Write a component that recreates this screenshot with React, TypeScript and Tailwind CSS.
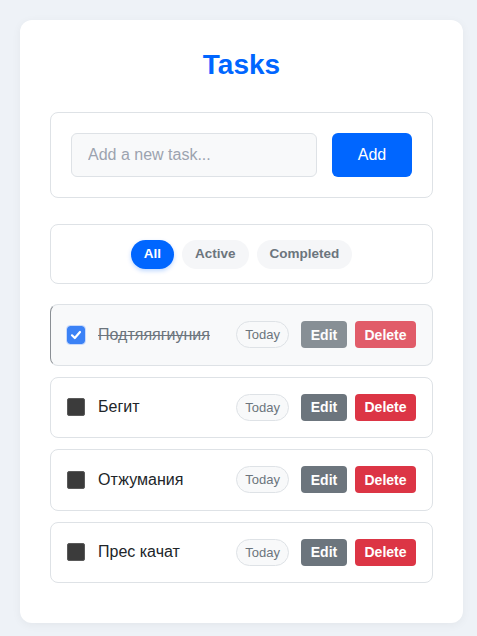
import { useState } from "react";

type Task = { id: number; text: string; done: boolean };

const initialTasks: Task[] = [
  { id: 1, text: "Подтяяягиуния", done: true },
  { id: 2, text: "Бегит", done: false },
  { id: 3, text: "Отжумания", done: false },
  { id: 4, text: "Прес качат", done: false },
];

const filters = ["All", "Active", "Completed"];

const App: React.FC = () => {
  const [tasks, setTasks] = useState<Task[]>(initialTasks);
  const [filter, setFilter] = useState("All");
  const [text, setText] = useState("");

  const toggle = (id: number) =>
    setTasks(tasks.map((t) => (t.id === id ? { ...t, done: !t.done } : t)));

  const visible = tasks.filter((t) =>
    filter === "Active" ? !t.done : filter === "Completed" ? t.done : true
  );

  return (
    <div className="min-h-[636px] bg-[#eef2f7] pt-5 pr-[14px] pb-3 pl-5 font-['Liberation_Sans',Arial,sans-serif]">
      <div className="rounded-xl bg-white px-[30px] pt-[28px] pb-10 shadow-[0_2px_10px_rgba(0,0,0,0.05)]">
        <h1 className="mb-[30px] text-center text-[28px] leading-[34px] font-bold text-[#0066ff]">
          Tasks
        </h1>

        <div className="mb-[26px] flex gap-[15px] rounded-lg border border-[#dee2e6] p-5">
          <input
            value={text}
            onChange={(e) => setText(e.target.value)}
            placeholder="Add a new task..."
            className="h-11 flex-1 rounded-md border border-[#dee2e6] bg-[#f8f9fa] px-4 text-base text-[#212529] outline-none placeholder:text-[#9ca3af]"
          />
          <button
            onClick={() => {
              if (!text.trim()) return;
              setTasks([...tasks, { id: Date.now(), text, done: false }]);
              setText("");
            }}
            className="h-11 w-20 rounded-md bg-[#0066ff] text-base text-white"
          >
            Add
          </button>
        </div>

        <div className="mb-5 flex justify-center gap-2 rounded-lg border border-[#dee2e6] py-[14.5px]">
          {filters.map((f) => (
            <button
              key={f}
              onClick={() => setFilter(f)}
              className={
                filter === f
                  ? "h-[29px] rounded-full bg-[#0066ff] px-[13px] text-[13.5px] font-bold text-white shadow-[0_2px_4px_rgba(0,102,255,0.25)]"
                  : "h-[29px] rounded-full bg-[#f5f6f8] px-[13px] text-[13.5px] font-bold text-[#6c757d]"
              }
            >
              {f}
            </button>
          ))}
        </div>

        <div className="flex flex-col gap-[11px]">
          {visible.map((t) => (
            <div
              key={t.id}
              className={
                t.done
                  ? "flex h-[61.5px] items-center rounded-lg border border-[#dee2e6] border-l-[#8a8f94] bg-[#f8f9fa] pr-4 pl-4"
                  : "flex h-[61.5px] items-center rounded-lg border border-[#dee2e6] bg-white pr-4 pl-4"
              }
            >
              <button
                onClick={() => toggle(t.id)}
                className={
                  t.done
                    ? "flex h-[18px] w-[18px] items-center justify-center rounded-[3px] bg-[#3b82f6] outline outline-1 outline-[#c8dafc]"
                    : "h-[18px] w-[18px] rounded-[2px] border border-[#5a5a5a] bg-[#3b3b3b]"
                }
              >
                {t.done && (
                  <svg width="12" height="12" viewBox="0 0 12 12">
                    <path
                      d="M2 6.3 L4.8 9 L10 3"
                      fill="none"
                      stroke="white"
                      strokeWidth="2.2"
                      strokeLinecap="round"
                      strokeLinejoin="round"
                    />
                  </svg>
                )}
              </button>
              <span
                className={
                  t.done
                    ? "ml-[13px] flex-1 text-base text-[#6c757d] line-through"
                    : "ml-[13px] flex-1 text-base text-[#212529]"
                }
              >
                {t.text}
              </span>
              <span className="mr-3 flex h-[27px] items-center rounded-full border border-[#dee2e6] bg-[#f8f9fa] px-2 text-[13px] text-[#6c757d]">
                Today
              </span>
              <button
                className={
                  t.done
                    ? "mr-2 h-[27px] w-[46px] rounded bg-[#6c757d] text-sm font-bold text-white opacity-80"
                    : "mr-2 h-[27px] w-[46px] rounded bg-[#6c757d] text-sm font-bold text-white"
                }
              >
                Edit
              </button>
              <button
                onClick={() => setTasks(tasks.filter((x) => x.id !== t.id))}
                className={
                  t.done
                    ? "h-[27px] w-[61px] rounded bg-[#dc3545] text-sm font-bold text-white opacity-80"
                    : "h-[27px] w-[61px] rounded bg-[#dc3545] text-sm font-bold text-white"
                }
              >
                Delete
              </button>
            </div>
          ))}
        </div>
      </div>
    </div>
  );
};

export default App;
